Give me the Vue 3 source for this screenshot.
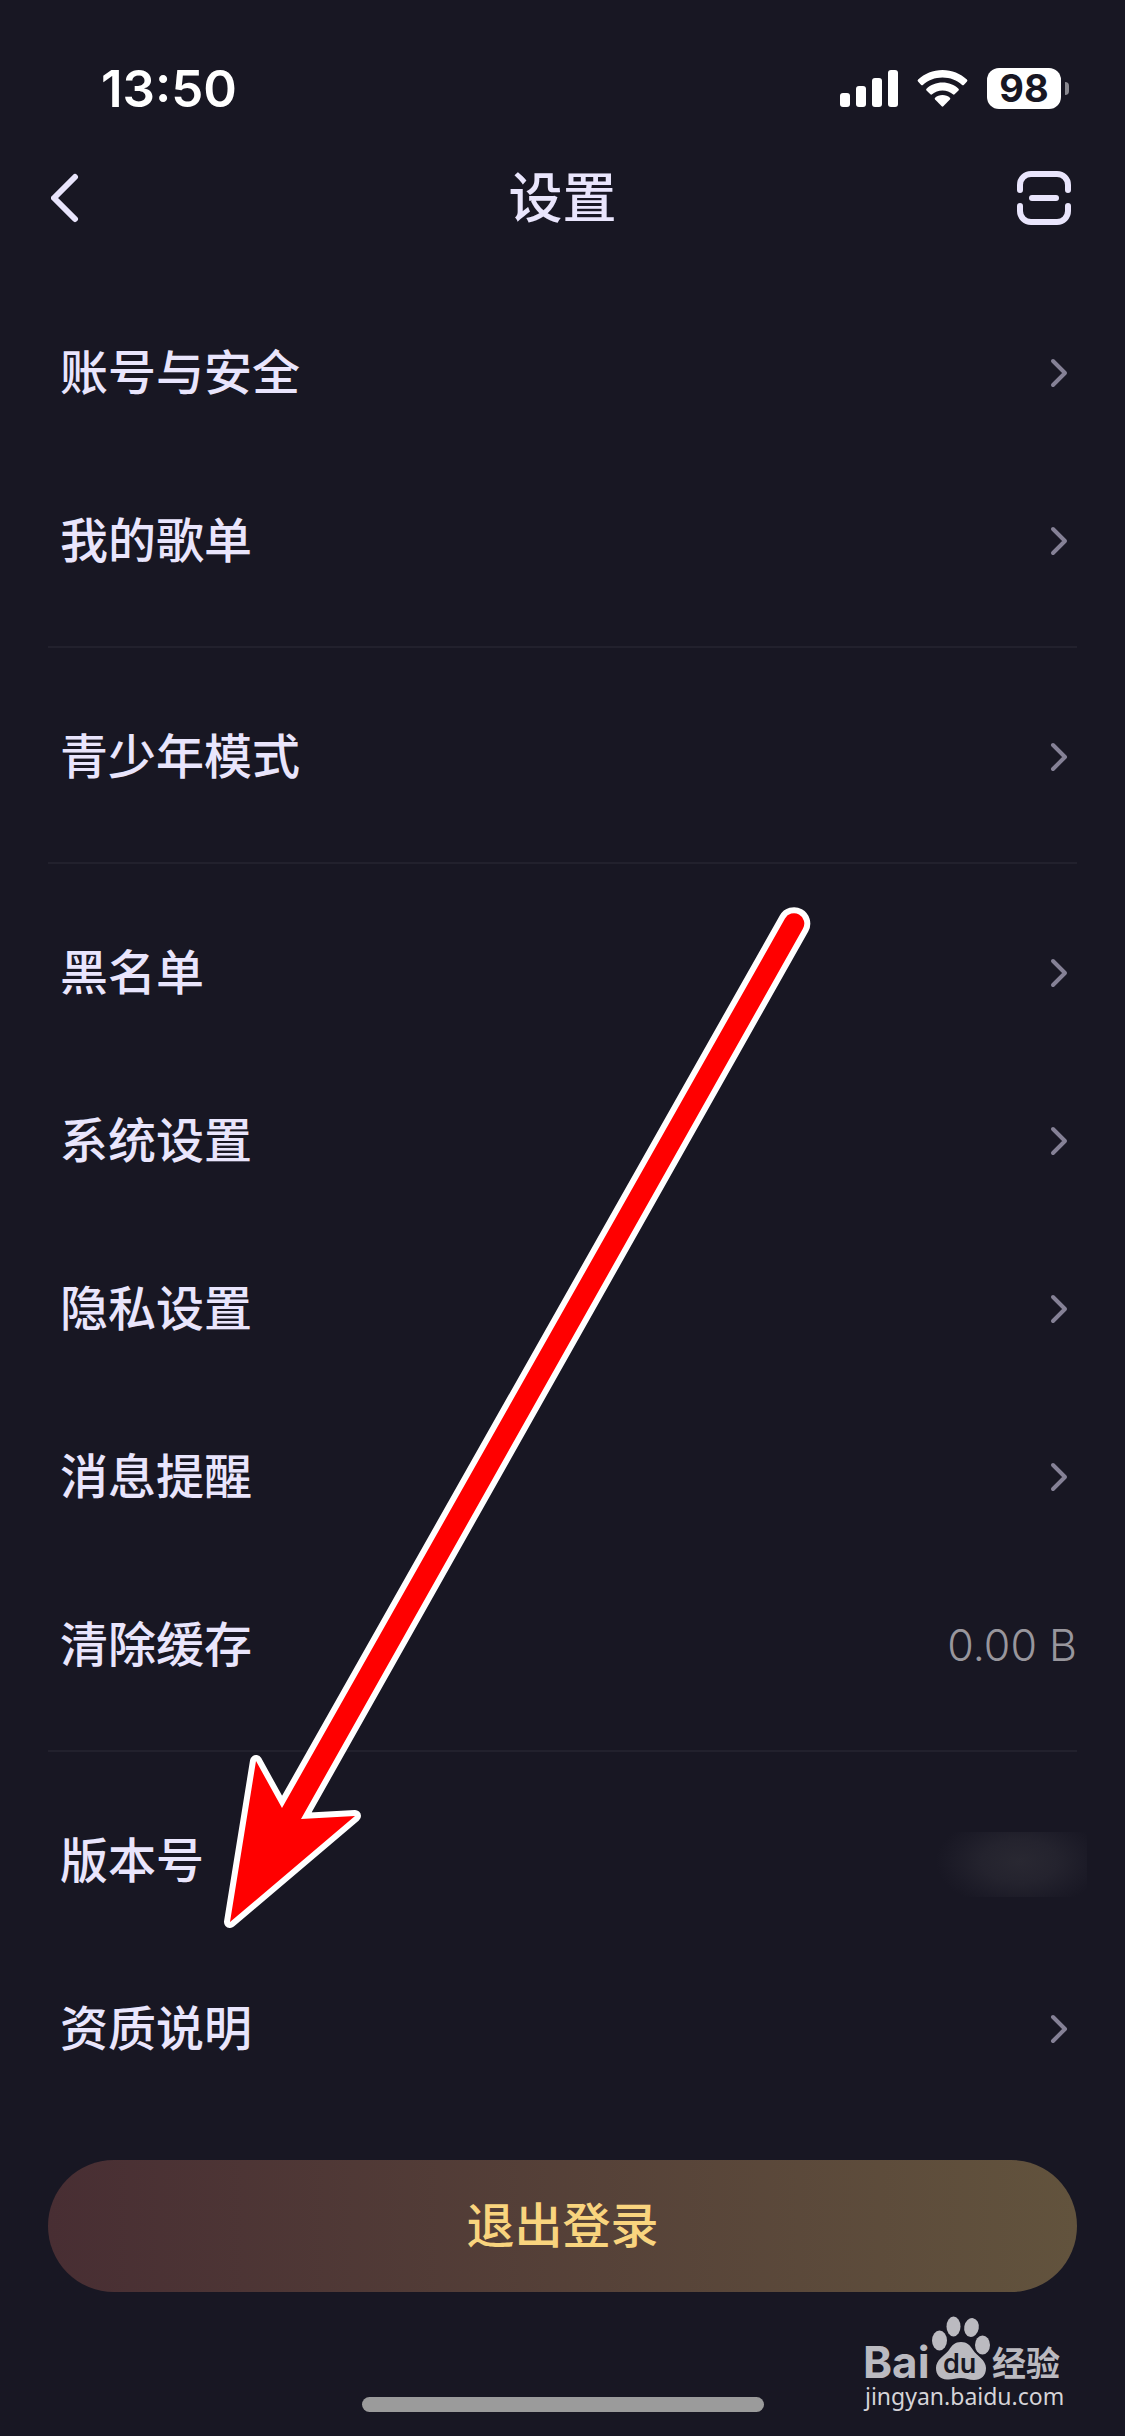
<script setup>
const groups = [
  [
    { label: '账号与安全' },
    { label: '我的歌单' },
  ],
  [
    { label: '青少年模式' },
  ],
  [
    { label: '黑名单' },
    { label: '系统设置' },
    { label: '隐私设置' },
    { label: '消息提醒' },
    { label: '清除缓存', value: '0.00 B' },
  ],
  [
    { label: '版本号', masked: true },
    { label: '资质说明' },
  ],
]
</script>

<template>
  <div class="page">
    <!-- Status bar -->
    <div class="status">
      <span class="time">13:50</span>
      <div class="status-icons">
        <svg class="signal" width="58" height="37" viewBox="0 0 58 37" aria-hidden="true">
          <rect x="0" y="23" width="10" height="14" rx="3" />
          <rect x="16" y="16" width="10" height="21" rx="3" />
          <rect x="32" y="8" width="10" height="29" rx="3" />
          <rect x="48" y="0" width="10" height="37" rx="3" />
        </svg>
        <svg class="wifi" width="51" height="37" viewBox="0 0 51 37" aria-hidden="true">
          <path d="M25.500 0C35 0 43.500 3.600 49.900 9.600Q50.900 10.600 50 11.600L46.800 14.900Q46 15.700 45.100 14.900C40 10.200 33 7.500 25.500 7.500S11 10.200 5.900 14.900Q5 15.700 4.200 14.900L1 11.600Q.1 10.600 1.100 9.600C7.500 3.600 16 0 25.500 0Z" />
          <path d="M25.500 12.500C31.800 12.500 37.300 14.800 41.500 18.700Q42.400 19.600 41.500 20.500L37.600 24.300Q36.800 25 35.900 24.300C33.100 21.900 29.500 20.500 25.500 20.500S17.900 21.900 15.100 24.300Q14.200 25 13.400 24.300L9.500 20.500Q8.600 19.600 9.500 18.700C13.700 14.800 19.200 12.500 25.500 12.500Z" />
          <path d="M25.500 25C28.500 25 31 26 32.900 27.700Q33.700 28.500 32.900 29.400L26.300 36.300Q25.500 37.100 24.700 36.300L18.100 29.400Q17.300 28.500 18.100 27.700C20 26 22.500 25 25.500 25Z" />
        </svg>
        <div class="battery">
          <span class="battery-level">98</span>
          <span class="battery-tip"></span>
        </div>
      </div>
    </div>

    <!-- Title bar -->
    <header class="header">
      <button class="icon-btn back" type="button" aria-label="返回">
        <svg width="30" height="54" viewBox="0 0 30 54">
          <path d="M24 6L3 27L24 48" />
        </svg>
      </button>
      <h1 class="title">设置</h1>
      <button class="icon-btn scan" type="button" aria-label="扫一扫">
        <svg width="57" height="54" viewBox="0 0 57 54">
          <path d="M3 19V14A11 11 0 0 1 14 3H40A11 11 0 0 1 51 14V19" />
          <path d="M3 35V40A11 11 0 0 0 14 51H40A11 11 0 0 0 51 40V35" />
          <path d="M15 27H39" />
        </svg>
      </button>
    </header>

    <!-- Settings list -->
    <main class="list">
      <ul v-for="(group, i) in groups" :key="i" class="group">
        <li v-for="item in group" :key="item.label">
          <div v-if="item.masked" class="row">
            <span>{{ item.label }}</span>
            <span class="mask"></span>
          </div>
          <button v-else class="row" type="button">
            <span>{{ item.label }}</span>
            <span v-if="item.value" class="value">{{ item.value }}</span>
            <svg v-else class="chevron" width="30" height="30" viewBox="0 0 30 30" aria-hidden="true">
              <path d="M6 3L18 15L6 27" />
            </svg>
          </button>
        </li>
      </ul>
    </main>

    <button class="logout" type="button">退出登录</button>

    <div class="home-bar"></div>

    <!-- Arrow over the list -->
    <svg class="arrow" width="620" height="1040" viewBox="210 900 620 1040" aria-hidden="true">
      <path class="arrow-edge" d="M230 1922L256 1761L282 1808L785 918.500A10 10 0 0 1 803 928.500L301 1819L355 1816Z" />
      <path class="arrow-fill" d="M230 1922L256 1761L282 1808L785 918.500A10 10 0 0 1 803 928.500L301 1819L355 1816Z" />
    </svg>

    <!-- Watermark -->
    <svg class="mark" width="210" height="100" viewBox="860 2314 210 100">
      <text class="mark-bai" x="863" y="2378">Bai</text>
      <ellipse cx="939.500" cy="2340.500" rx="7.500" ry="10" />
      <ellipse cx="953.500" cy="2326.500" rx="7" ry="10" />
      <ellipse cx="971.500" cy="2327.500" rx="7.300" ry="9.500" transform="rotate(10 971.500 2327.500)" />
      <ellipse cx="982.500" cy="2345" rx="7.500" ry="9.500" />
      <path d="M961 2342C967 2342 970 2345 973 2350C977 2356 986 2360 986 2368C986 2376 981 2380 974 2380C969 2380 966 2378 961 2378S952 2380 947 2379.500C940 2379 936 2375 936 2368C936 2360 944 2356 949 2350C952 2345 955 2342 961 2342Z" />
      <text class="mark-du" x="943" y="2373">du</text>
      <text class="mark-cn" x="992" y="2376">经验</text>
      <text class="mark-url" x="865" y="2405">jingyan.baidu.com</text>
    </svg>
  </div>
</template>

<style>
body {
  background: #181723;
}
</style>

<style scoped>
.page {
  position: relative;
  display: flex;
  flex-direction: column;
  box-sizing: border-box;
  min-height: 100vh;
  padding-bottom: 24px;
  background: #181723;
  color: #e9e5fc;
  font-family: Inter, 'Noto Sans CJK SC', sans-serif;
  overflow: hidden;
}

button {
  margin: 0;
  padding: 0;
  border: 0;
  background: none;
  color: inherit;
  font-family: inherit;
  cursor: pointer;
}

/* ── Status bar ── */
.status {
  display: flex;
  align-items: center;
  justify-content: space-between;
  box-sizing: border-box;
  height: 132px;
  padding: 45px 56px 0 101px;
  color: #fff;
}

.time {
  font-size: 51px;
  font-weight: 600;
  line-height: 60px;
}

.status-icons {
  display: flex;
  align-items: center;
  gap: 19px;
}

.signal,
.wifi {
  fill: #fff;
}

.battery {
  display: flex;
  align-items: center;
  gap: 4px;
}

.battery-level {
  width: 74px;
  border-radius: 12px;
  background: #fff;
  color: #181723;
  font-size: 38px;
  font-weight: 700;
  line-height: 41px;
  text-align: center;
}

.battery-tip {
  width: 4px;
  height: 13px;
  border-radius: 0 6px 6px 0;
  background: #89888f;
}

/* ── Title bar ── */
.header {
  display: grid;
  grid-template-columns: 1fr auto 1fr;
  align-items: center;
  height: 132px;
  padding: 0 51px;
}

.title {
  margin: 0;
  padding-top: 2px;
  font-size: 54px;
  font-weight: 500;
  line-height: 72px;
}

.icon-btn {
  display: flex;
}

.icon-btn svg {
  fill: none;
  stroke: #e9e5fc;
  stroke-width: 6;
  stroke-linecap: round;
  stroke-linejoin: round;
}

.scan {
  justify-self: end;
}

/* ── List ── */
.list {
  padding: 0 48px;
}

.group {
  margin: 0;
  padding: 24px 0 22px;
  list-style: none;
}

.group + .group {
  border-top: 2px solid #22212d;
}

.group:last-child {
  padding-bottom: 0;
}

.row {
  display: flex;
  align-items: center;
  justify-content: space-between;
  box-sizing: border-box;
  width: 100%;
  height: 168px;
  padding: 1px 0 0 12px;
  font-size: 48px;
  font-weight: 500;
  line-height: 72px;
  text-align: left;
}

.chevron {
  fill: none;
  stroke: #858196;
  stroke-width: 4;
  stroke-linecap: round;
  stroke-linejoin: round;
}

.value {
  color: #98969d;
  font-size: 43px;
  font-weight: 300;
}

.mask {
  width: 168px;
  height: 65px;
  margin: 8px -10px 0 0;
  background: radial-gradient(ellipse 84px 48px at 60% 45%, #292832 0%, #24232e 45%, #1c1b27 80%, #181723 100%);
}

/* ── Bottom ── */
.logout {
  height: 132px;
  margin: 48px 48px 0;
  border-radius: 66px;
  background: linear-gradient(to right, #482e33, #62533d);
  color: #f9d47e;
  font-size: 48px;
  font-weight: 500;
  line-height: 132px;
}

.home-bar {
  align-self: center;
  width: 402px;
  height: 15px;
  margin-top: auto;
  border-radius: 8px;
  background: #9b9b9b;
}

/* ── Overlays ── */
.arrow {
  position: absolute;
  top: 900px;
  left: 210px;
  pointer-events: none;
}

.arrow-edge {
  fill: #fff;
  stroke: #fff;
  stroke-width: 12;
  stroke-linejoin: round;
}

.arrow-fill {
  fill: #f00;
}

.mark {
  position: absolute;
  right: 55px;
  bottom: 22px;
  fill: #bbbac0;
}

.mark-bai {
  font-size: 44px;
  font-weight: 700;
}

.mark-du {
  fill: #181723;
  font-size: 27px;
  font-weight: 600;
}

.mark-cn {
  font-size: 34px;
  font-weight: 700;
}

.mark-url {
  fill: #d5d4d8;
  font-family: 'Noto Sans', 'Open Sans', sans-serif;
  font-size: 23px;
}
</style>
